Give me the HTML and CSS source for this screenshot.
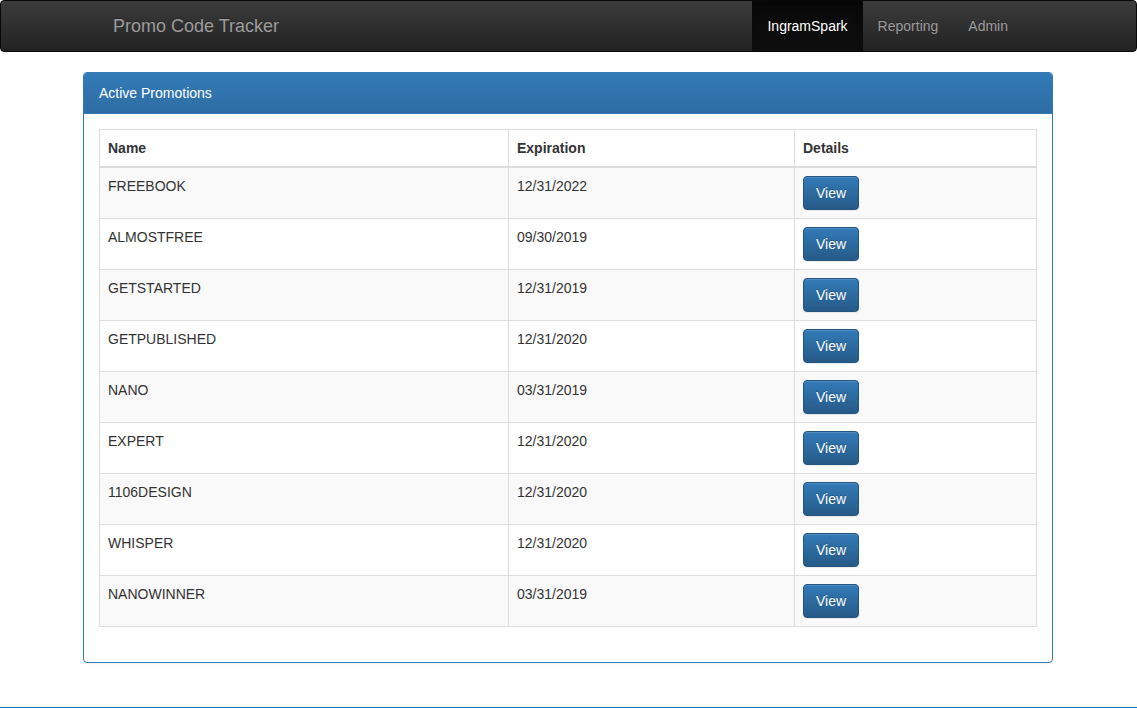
FILE: index.html
```html
<!DOCTYPE html>
<html>
<head>
<meta charset="utf-8">
<title>Promo Code Tracker</title>
<link rel="stylesheet" href="styles.css">
</head>
<body>
<nav class="navbar">
  <div class="container nav-inner">
    <a class="brand" href="#">Promo Code Tracker</a>
    <ul class="nav">
      <li class="active"><a href="#">IngramSpark</a></li>
      <li><a href="#">Reporting</a></li>
      <li><a href="#">Admin</a></li>
    </ul>
  </div>
</nav>
<main class="container">
  <section class="panel">
    <div class="panel-heading">Active Promotions</div>
    <div class="panel-body">
      <table class="table">
        <colgroup><col class="c1"><col class="c2"><col class="c3"></colgroup>
        <thead>
          <tr><th>Name</th><th>Expiration</th><th>Details</th></tr>
        </thead>
        <tbody>
          <tr><td>FREEBOOK</td><td>12/31/2022</td><td><a class="btn" href="#">View</a></td></tr>
          <tr><td>ALMOSTFREE</td><td>09/30/2019</td><td><a class="btn" href="#">View</a></td></tr>
          <tr><td>GETSTARTED</td><td>12/31/2019</td><td><a class="btn" href="#">View</a></td></tr>
          <tr><td>GETPUBLISHED</td><td>12/31/2020</td><td><a class="btn" href="#">View</a></td></tr>
          <tr><td>NANO</td><td>03/31/2019</td><td><a class="btn" href="#">View</a></td></tr>
          <tr><td>EXPERT</td><td>12/31/2020</td><td><a class="btn" href="#">View</a></td></tr>
          <tr><td>1106DESIGN</td><td>12/31/2020</td><td><a class="btn" href="#">View</a></td></tr>
          <tr><td>WHISPER</td><td>12/31/2020</td><td><a class="btn" href="#">View</a></td></tr>
          <tr><td>NANOWINNER</td><td>03/31/2019</td><td><a class="btn" href="#">View</a></td></tr>
        </tbody>
      </table>
    </div>
  </section>
</main>
<footer class="footer"></footer>
</body>
</html>
```
FILE: styles.css
```css
* { box-sizing: border-box; }
html, body { margin: 0; padding: 0; }
body {
  font-family: "Liberation Sans", Arial, Helvetica, sans-serif;
  font-size: 14px;
  line-height: 20px;
  color: #333;
  background: #fff;
}
a { text-decoration: none; }
.container {
  width: 970px;
  margin-left: calc(50% - 485.5px);
  margin-right: auto;
}
.navbar {
  height: 52px;
  border: 1px solid #080808;
  border-radius: 4px;
  background-image: linear-gradient(to bottom, #3c3c3c 0, #222 100%);
  margin-bottom: 20px;
}
.nav-inner {
  display: flex;
  justify-content: space-between;
  padding: 0 30px 0 15px;
  height: 50px;
}
.brand {
  display: block;
  padding: 15px 15px;
  font-size: 18px;
  line-height: 20px;
  color: #9d9d9d;
  text-shadow: 0 -1px 0 rgba(0,0,0,.25);
}
.nav {
  display: flex;
  list-style: none;
  margin: 0;
  padding: 0;
}
.nav li a {
  display: block;
  padding: 15px 15px;
  line-height: 20px;
  color: #9d9d9d;
  text-shadow: 0 -1px 0 rgba(0,0,0,.25);
}
.nav li.active a {
  color: #fff;
  background-image: linear-gradient(to bottom, #080808 0, #0f0f0f 100%);
  box-shadow: inset 0 3px 9px rgba(0,0,0,.25);
}
.panel {
  border: 1px solid #337ab7;
  border-radius: 4px;
  background: #fff;
  box-shadow: 0 1px 2px rgba(0,0,0,.05);
}
.panel-heading {
  padding: 10px 15px;
  color: #fff;
  background-image: linear-gradient(to bottom, #337ab7 0, #2e6da4 100%);
  border-bottom: 1px solid #337ab7;
  border-radius: 3px 3px 0 0;
}
.panel-body {
  padding: 15px;
}
.table {
  width: 100%;
  border-collapse: collapse;
  border-spacing: 0;
  border: 1px solid #ddd;
  margin-bottom: 20px;
}
.c1 { width: 409px; }
.c2 { width: 286px; }
.table th, .table td {
  padding: 8px;
  line-height: 20px;
  text-align: left;
  vertical-align: top;
  border: 1px solid #ddd;
}
.table th {
  font-weight: bold;
  vertical-align: bottom;
  border-bottom: 2px solid #ddd;
}
.table tbody tr:nth-child(odd) { background: #f9f9f9; }
.btn {
  display: inline-block;
  padding: 6px 12px;
  font-size: 14px;
  line-height: 20px;
  color: #fff;
  border: 1px solid #245580;
  border-radius: 4px;
  background-image: linear-gradient(to bottom, #337ab7 0, #265a88 100%);
  text-shadow: 0 -1px 0 rgba(0,0,0,.2);
  box-shadow: inset 0 1px 0 rgba(255,255,255,.15), 0 1px 1px rgba(0,0,0,.075);
}
.footer {
  margin-top: 44px;
  height: 2px;
  border-top: 1px solid #1a6fc4;
  background: #000;
}
```
